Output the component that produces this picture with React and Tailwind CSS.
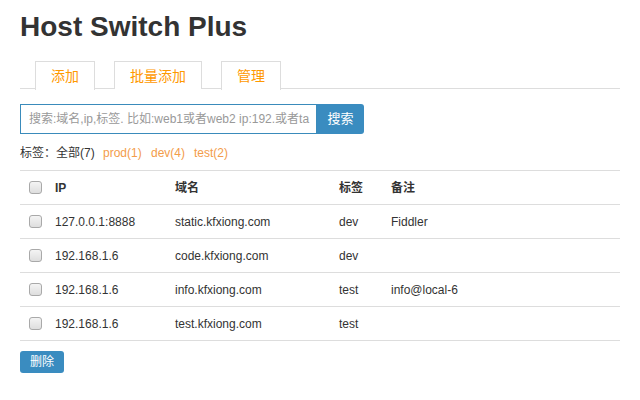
import React from "react";

const rows = [
  ["127.0.0.1:8888", "static.kfxiong.com", "dev", "Fiddler"],
  ["192.168.1.6", "code.kfxiong.com", "dev", ""],
  ["192.168.1.6", "info.kfxiong.com", "test", "info@local-6"],
  ["192.168.1.6", "test.kfxiong.com", "test", ""],
];

function Box() {
  return (
    <span className="block w-[13px] h-[13px] rounded-[3px] border border-[#a9a9a9] bg-gradient-to-b from-[#f4f4f4] to-[#dedede]" />
  );
}

export default function App() {
  const font = { fontFamily: '"Liberation Sans", Arial, "Noto Sans CJK SC", sans-serif' };
  return (
    <div className="w-[640px] h-[400px] bg-white text-[#333] px-5" style={font}>
      <h1 className="pt-[11px] text-[28px] leading-[32px] font-bold text-[#333]">Host Switch Plus</h1>
      <div className="mt-[18px] flex border-b border-[#ddd] pl-[15px] gap-[19px] h-[28px]">
        <div className="h-[29px] border border-[#ddd] border-b-0 px-[15px] text-[14px] leading-[28px] text-[#f90] bg-white">添加</div>
        <div className="h-[28px] border border-[#ddd] border-b-0 px-[15px] text-[14px] leading-[28px] text-[#f90] bg-white">批量添加</div>
        <div className="h-[29px] border border-[#ddd] border-b-0 px-[15px] text-[14px] leading-[28px] text-[#f90] bg-white">管理</div>
      </div>
      <div className="mt-[15px] flex h-[30px] w-[344px]">
        <div className="flex-1 border border-[#3a8bbb] flex items-center pl-2 text-[12px] text-[#999] overflow-hidden whitespace-nowrap">
          搜索:域名,ip,标签. 比如:web1或者web2 ip:192.或者ta
        </div>
        <div className="w-[47px] bg-[#3a8cc0] rounded-r-[3px] text-white text-[13px] flex items-center justify-center">搜索</div>
      </div>
      <div className="mt-[11px] text-[12px] leading-[16px] flex">
        <span className="text-[#333] w-[83px]">标签：全部(7)</span>
        <span className="text-[#f39c4a] w-[48px]">prod(1)</span>
        <span className="text-[#f39c4a] w-[43px]">dev(4)</span>
        <span className="text-[#f39c4a]">test(2)</span>
      </div>
      <div className="mt-[9px] border-t border-[#ddd] w-[600px] text-[12px]">
        <div className="grid grid-cols-[35px_120px_164px_52px_1fr] h-[34px] items-center border-b border-[#ddd] font-bold">
          <div className="pl-[9px]"><Box /></div>
          <div>IP</div>
          <div>域名</div>
          <div>标签</div>
          <div>备注</div>
        </div>
        {rows.map((r, i) => (
          <div key={i} className="grid grid-cols-[35px_120px_164px_52px_1fr] h-[34px] items-center border-b border-[#ddd]">
            <div className="pl-[9px]"><Box /></div>
            <div>{r[0]}</div>
            <div>{r[1]}</div>
            <div>{r[2]}</div>
            <div>{r[3]}</div>
          </div>
        ))}
      </div>
      <div className="mt-[10px] w-[44px] h-[22px] rounded-[3px] bg-[#3a8cc0] text-white text-[12px] flex items-center justify-center">删除</div>
    </div>
  );
}
